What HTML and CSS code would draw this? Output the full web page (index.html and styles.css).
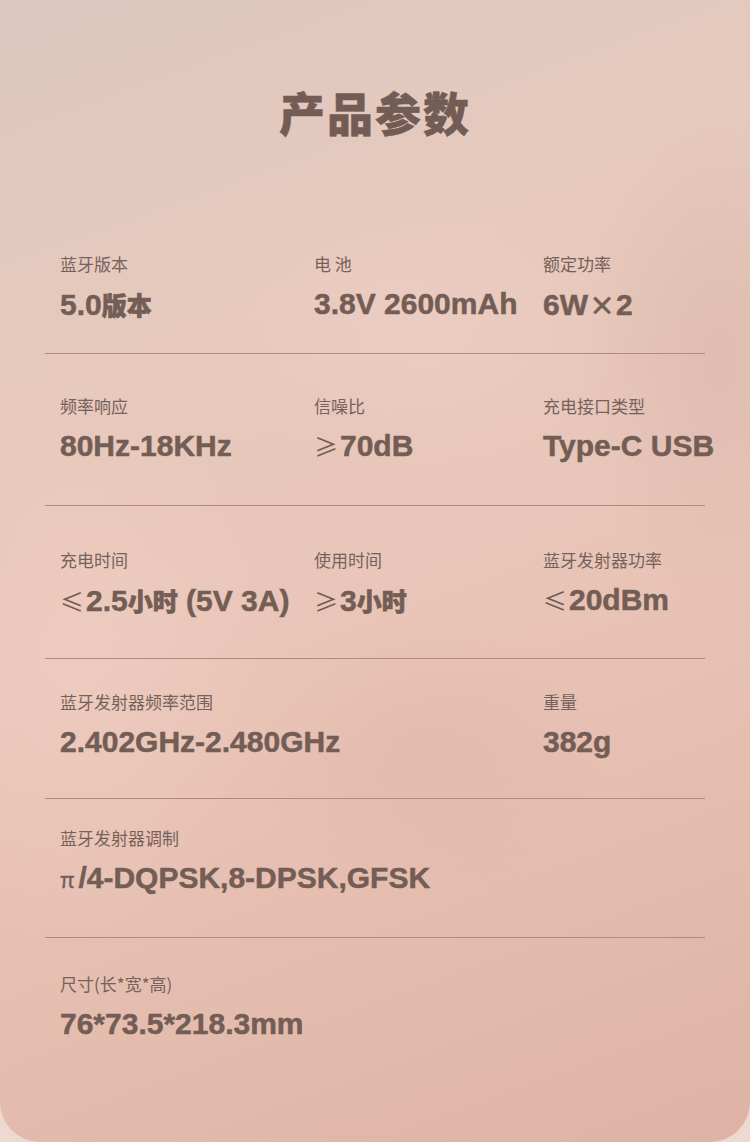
FILE: index.html
```html
<!DOCTYPE html>
<html lang="zh-CN">
<head>
<meta charset="utf-8">
<title>产品参数</title>
<link rel="stylesheet" href="styles.css">
</head>
<body>
<div class="page">
  <h1 class="title">产品参数</h1>

  <div class="row row-1">
    <div class="cell"><div class="label">蓝牙版本</div><div class="value">5.0<span class="cjk">版本</span></div></div>
    <div class="cell"><div class="label">电 池</div><div class="value">3.8V 2600mAh</div></div>
    <div class="cell"><div class="label">额定功率</div><div class="value">6W<span class="times">×</span>2</div></div>
  </div>

  <div class="row row-2">
    <div class="cell"><div class="label">频率响应</div><div class="value">80Hz-18KHz</div></div>
    <div class="cell"><div class="label">信噪比</div><div class="value"><span class="sym">≥</span>70dB</div></div>
    <div class="cell"><div class="label">充电接口类型</div><div class="value">Type-C USB</div></div>
  </div>

  <div class="row row-3">
    <div class="cell"><div class="label">充电时间</div><div class="value"><span class="sym">≤</span>2.5<span class="cjk">小时</span> (5V 3A)</div></div>
    <div class="cell"><div class="label">使用时间</div><div class="value"><span class="sym">≥</span>3<span class="cjk">小时</span></div></div>
    <div class="cell"><div class="label">蓝牙发射器功率</div><div class="value"><span class="sym">≤</span>20dBm</div></div>
  </div>

  <div class="row row-4">
    <div class="cell cell-wide"><div class="label">蓝牙发射器频率范围</div><div class="value">2.402GHz-2.480GHz</div></div>
    <div class="cell"><div class="label">重量</div><div class="value">382g</div></div>
  </div>

  <div class="row row-5">
    <div class="cell cell-full"><div class="label">蓝牙发射器调制</div><div class="value"><span class="pi">π</span>/4-DQPSK,8-DPSK,GFSK</div></div>
  </div>

  <div class="row row-6 row-last">
    <div class="cell cell-full"><div class="label">尺寸(长*宽*高)</div><div class="value">76*73.5*218.3mm</div></div>
  </div>
</div>
</body>
</html>
```

FILE: styles.css
```css
html, body {
  margin: 0;
  padding: 0;
}

body {
  background: #eed9d0;
  width: 750px;
  height: 1142px;
  overflow: hidden;
}

.page {
  position: relative;
  width: 750px;
  height: 1142px;
  box-sizing: border-box;
  border-radius: 0 0 40px 40px;
  overflow: hidden;
  color: #735e56;
  font-family: "Noto Sans CJK SC", sans-serif;
  background:
    radial-gradient(ellipse 260px 420px at 80px 660px, rgba(240, 206, 193, 0.6), rgba(240, 206, 193, 0) 70%),
    radial-gradient(ellipse 300px 200px at 420px 330px, rgba(240, 210, 198, 0.45), rgba(240, 210, 198, 0) 70%),
    radial-gradient(ellipse 200px 360px at 720px 360px, rgba(205, 170, 158, 0.35), rgba(205, 170, 158, 0) 70%),
    radial-gradient(ellipse 260px 200px at 430px 760px, rgba(215, 178, 164, 0.35), rgba(215, 178, 164, 0) 70%),
    linear-gradient(160deg, #dcc7be 0%, #e6c9bd 25%, #e9c6b9 50%, #e5bdaf 75%, #dcb3a5 100%);
}

.title {
  margin: 0;
  padding-top: 81px;
  height: 60px;
  line-height: 60px;
  text-align: center;
  font-size: 46px;
  font-weight: 900;
  letter-spacing: 2px;
  color: #735c54;
  -webkit-text-stroke: 0.5px #735c54;
}

.row {
  display: grid;
  grid-template-columns: 254px 229px 1fr;
  margin: 0 45px;
  padding-left: 15px;
  border-bottom: 1px solid #b58a7e;
}

.row-last {
  border-bottom: none;
}

.row-1 { padding-top: 113px; padding-bottom: 32px; }
.row-2 { padding-top: 42px; padding-bottom: 42px; }
.row-3 { padding-top: 44px; padding-bottom: 41px; }
.row-4 { padding-top: 33px; padding-bottom: 39px; }
.row-5 { padding-top: 29px; padding-bottom: 42px; }
.row-6 { padding-top: 36px; }

.cell-wide {
  grid-column: 1 / 3;
}

.cell-full {
  grid-column: 1 / 4;
}

.label {
  font-size: 17px;
  line-height: 20px;
  height: 20px;
  color: #76625b;
  white-space: nowrap;
}

.value {
  margin-top: 13px;
  font-family: "Liberation Sans", "Noto Sans CJK SC", sans-serif;
  font-size: 30px;
  line-height: 34px;
  height: 34px;
  font-weight: 700;
  white-space: nowrap;
  color: #735d55;
  -webkit-text-stroke: 0.5px #735d55;
}

.cjk {
  font-family: "Noto Sans CJK SC", sans-serif;
  font-size: 25px;
  font-weight: 900;
  -webkit-text-stroke: 0.6px #735d55;
}

.sym {
  font-family: "Noto Sans CJK SC", sans-serif;
  font-weight: 400;
  font-size: 24px;
  -webkit-text-stroke: 0;
  margin-right: 2px;
}

.times {
  font-family: "Noto Sans CJK SC", sans-serif;
  font-weight: 700;
  font-size: 26px;
  margin: 0 1px;
}

.pi {
  font-family: "Noto Sans CJK SC", sans-serif;
  font-weight: 400;
  font-size: 22px;
  -webkit-text-stroke: 0.3px #735d55;
  margin-right: 4px;
}
```
